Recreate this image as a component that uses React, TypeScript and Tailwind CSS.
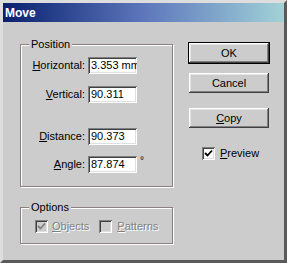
import React from 'react';

const raised =
	'bg-[#cccccc] shadow-[inset_-1px_-1px_#404040,inset_1px_1px_#ffffff,inset_-2px_-2px_#808080,inset_2px_2px_#e4e4e4]';

function Btn({children, def}: {children: React.ReactNode; def?: boolean}) {
	return (
		<button
			className={`h-[20px] w-[80px] text-[11px] text-black flex items-center justify-center ${raised} ${
				def ? 'outline outline-1 outline-black' : ''
			}`}
		>
			{children}
		</button>
	);
}

function Check({checked, disabled}: {checked?: boolean; disabled?: boolean}) {
	return (
		<span
			className={`w-[13px] h-[13px] shrink-0 flex items-center justify-center ${
				disabled ? 'bg-[#cccccc]' : 'bg-white'
			} shadow-[inset_1px_1px_#808080,inset_-1px_-1px_#ffffff,inset_2px_2px_#404040,inset_-2px_-2px_#dfdfdf]`}
		>
			{checked && (
				<svg width="9" height="9" viewBox="0 0 9 9">
					<polyline
						points="1,4 3.5,6.5 8,1.5"
						fill="none"
						stroke={disabled ? '#808080' : '#000'}
						strokeWidth="1.8"
					/>
				</svg>
			)}
		</span>
	);
}

function Field({label, u, value, extra}: {label: string; u: string; value: string; extra?: React.ReactNode}) {
	const rest = label.slice(u.length);
	return (
		<div className="flex items-center h-[17px]">
			<span className="w-[65px] text-right pr-[1px] whitespace-nowrap">
				<span className="underline">{u}</span>
				{rest}
			</span>
			<div className="ml-[2px] w-[49px] h-[17px] bg-white pl-[3px] leading-[17px] overflow-hidden whitespace-nowrap shadow-[inset_1px_1px_#808080,inset_-1px_-1px_#ffffff,inset_2px_2px_#404040,inset_-2px_-2px_#dfdfdf]">
				{value}
			</div>
			{extra}
		</div>
	);
}

function Group({title, className, children}: {title: string; className: string; children: React.ReactNode}) {
	return (
		<div
			className={`relative w-[153px] border border-[#8a8080] shadow-[inset_1px_1px_#ffffff,1px_1px_#ffffff] ${className}`}
		>
			<span className="absolute -top-[8px] left-[8px] px-[2px] bg-[#cccccc] leading-[14px]">{title}</span>
			{children}
		</div>
	);
}

export default function App() {
	return (
		<div
			className="w-[287px] h-[263px] flex flex-col bg-[#cccccc] border-t-[3px] border-l-[3px] border-t-[#dedede] border-l-[#dedede] border-r-[3px] border-b-[3px] border-r-[#5a5a5a] border-b-[#5a5a5a] text-[11px] text-black"
			style={{fontFamily: '"Liberation Sans", Arial, sans-serif'}}
		>
			<div className="h-[19px] shrink-0 flex items-center pl-[2px] bg-linear-to-r from-[#0b1f6e] via-[#5e76bb] to-[#a2d2d6]">
				<span className="text-white font-bold text-[12px]">Move</span>
			</div>
			<div className="flex pl-[17px] pt-[21px]">
				<div className="flex flex-col mt-[1px]">
					<Group title="Position" className="h-[143px] pt-[12px]">
						<div className="flex flex-col">
							<Field label="Horizontal:" u="H" value="3.353 mm" />
							<div className="mt-[12px]">
								<Field label="Vertical:" u="V" value="90.311" />
							</div>
							<div className="mt-[25px]">
								<Field label="Distance:" u="D" value="90.373" />
							</div>
							<div className="mt-[11px]">
								<Field
									label="Angle:"
									u="A"
									value="87.874"
									extra={<span className="ml-[3px] self-start -mt-[3px] text-[10px]">°</span>}
								/>
							</div>
						</div>
					</Group>
					<Group title="Options" className="h-[37px] mt-[20px] pt-[10px]">
						<div className="flex items-center text-[#808080] [text-shadow:1px_1px_0_#ffffff]">
							<div className="ml-[14px]">
								<Check checked disabled />
							</div>
							<span className="ml-[4px]">
								<span className="underline">O</span>bjects
							</span>
							<div className="ml-[10px]">
								<Check disabled />
							</div>
							<span className="ml-[5px]">
								<span className="underline">P</span>atterns
							</span>
						</div>
					</Group>
				</div>
				<div className="ml-[16px] flex flex-col">
					<Btn def>OK</Btn>
					<div className="mt-[10px]">
						<Btn>Cancel</Btn>
					</div>
					<div className="mt-[15px]">
						<Btn>
							<span className="underline">C</span>opy
						</Btn>
					</div>
					<div className="mt-[17px] ml-[13px] flex items-center">
						<Check checked />
						<span className="ml-[5px]">
							<span className="underline">P</span>review
						</span>
					</div>
				</div>
			</div>
		</div>
	);
}
